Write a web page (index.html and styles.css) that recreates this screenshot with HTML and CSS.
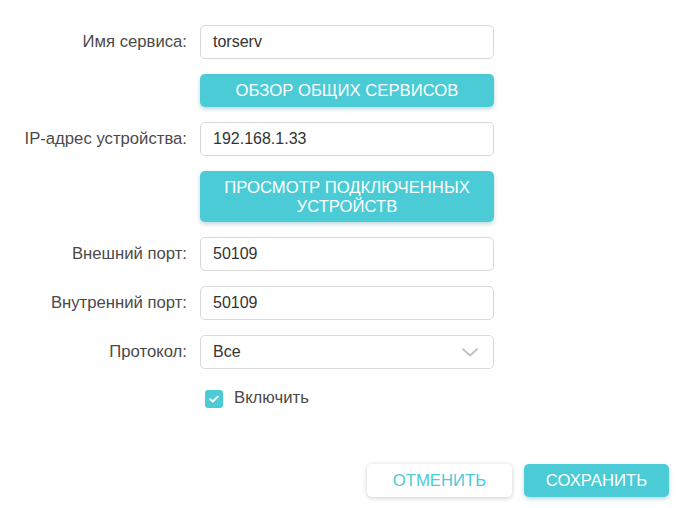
FILE: index.html
```html
<!DOCTYPE html>
<html lang="ru">
<head>
<meta charset="utf-8">
<link rel="stylesheet" href="styles.css">
</head>
<body>
<div class="page">
  <form class="form">
    <label class="lbl">Имя сервиса:</label>
    <div class="field"><div class="input">torserv</div></div>

    <div></div>
    <div class="field"><button type="button" class="btn btn-primary btn-wide">ОБЗОР ОБЩИХ СЕРВИСОВ</button></div>

    <label class="lbl">IP-адрес устройства:</label>
    <div class="field"><div class="input">192.168.1.33</div></div>

    <div></div>
    <div class="field"><button type="button" class="btn btn-primary btn-wide btn-tall">ПРОСМОТР ПОДКЛЮЧЕННЫХ<br>УСТРОЙСТВ</button></div>

    <label class="lbl">Внешний порт:</label>
    <div class="field"><div class="input">50109</div></div>

    <label class="lbl">Внутренний порт:</label>
    <div class="field"><div class="input">50109</div></div>

    <label class="lbl">Протокол:</label>
    <div class="field">
      <div class="input select">
        <span>Все</span>
        <svg class="chev" width="16" height="9" viewBox="0 0 16 9"><path d="M1 1.2 L8 7.6 L15 1.2" fill="none" stroke="#c4c4c4" stroke-width="2" stroke-linecap="round" stroke-linejoin="round"/></svg>
      </div>
    </div>

    <div></div>
    <div class="field check-row">
      <span class="checkbox">
        <svg width="12" height="10" viewBox="0 0 12 10"><path d="M2.2 5.2 L4.8 7.6 L9.8 2.6" fill="none" stroke="#fff" stroke-width="2" stroke-linecap="round" stroke-linejoin="round"/></svg>
      </span>
      <span class="check-text">Включить</span>
    </div>
  </form>

  <div class="actions">
    <button type="button" class="btn btn-secondary">ОТМЕНИТЬ</button>
    <button type="button" class="btn btn-primary">СОХРАНИТЬ</button>
  </div>
</div>
</body>
</html>
```

FILE: styles.css
```css
* { box-sizing: border-box; }

html, body {
  margin: 0;
  padding: 0;
  background: #ffffff;
}

body {
  font-family: "Liberation Sans", Arial, sans-serif;
  font-size: 16.7px;
  color: #333333;
}

.page {
  width: 683px;
  height: 508px;
  padding-top: 25px;
}

.form {
  display: grid;
  grid-template-columns: 187px 294px;
  column-gap: 13px;
  row-gap: 15px;
}

.lbl {
  text-align: right;
  color: #4a4a4a;
  line-height: 34px;
  height: 34px;
  white-space: nowrap;
}

.field {
  display: flex;
}

.input {
  width: 294px;
  height: 34px;
  border: 1px solid #d9d9d9;
  border-radius: 5px;
  padding: 0 12px;
  font-size: 16px;
  line-height: 32px;
  color: #333333;
  background: #fff;
}

.select {
  display: flex;
  align-items: center;
  justify-content: space-between;
  padding-right: 15px;
}

.chev { display: block; margin-top: 1px; }

.btn {
  font-family: "Liberation Sans", Arial, sans-serif;
  font-size: 16.7px;
  border: none;
  border-radius: 5px;
  height: 33px;
  padding: 0;
  cursor: pointer;
}

.btn-primary {
  background: #4acbd6;
  color: #ffffff;
  box-shadow: 0 2px 4px rgba(60, 140, 150, 0.35);
}

.btn-secondary {
  background: #ffffff;
  color: #4acbd6;
  box-shadow: 0 1px 5px rgba(0, 0, 0, 0.2);
}

.btn-wide {
  width: 294px;
}

.btn-tall {
  height: 51px;
  line-height: 19px;
  padding-top: 1px;
}

.check-row {
  align-items: center;
  height: 26px;
  padding-left: 5px;
}

.checkbox {
  width: 18px;
  height: 18px;
  border-radius: 3px;
  background: #4acbd6;
  display: flex;
  align-items: center;
  justify-content: center;
  margin-top: 3px;
}

.check-text {
  margin-left: 11px;
  color: #4a4a4a;
  margin-top: 2px;
}

.actions {
  display: flex;
  justify-content: flex-end;
  gap: 12px;
  padding-right: 14px;
  margin-top: 54px;
}

.actions .btn {
  width: 145px;
}
```
